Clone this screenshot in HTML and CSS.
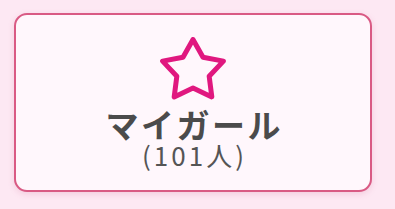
FILE: index.html
```html
<!DOCTYPE html>
<html lang="ja">
<head>
<meta charset="utf-8">
<link rel="stylesheet" href="styles.css">
</head>
<body>
<div class="card">
  <svg class="star" width="70" height="66" viewBox="0 0 70 66" aria-hidden="true">
    <polygon points="35,2.5 45,20.25 65.43,24.11 51.17,39.25 53.81,59.89 35,51 16.19,59.89 18.83,39.25 4.57,24.11 25,20.25" fill="none" stroke="#e0187f" stroke-width="5" stroke-linejoin="round"/>
  </svg>
  <div class="title">マイガール</div>
  <div class="count">(101人)</div>
</div>
</body>
</html>
```

FILE: styles.css
```css
html, body {
  margin: 0;
  padding: 0;
}
body {
  background: #fde8f3;
  width: 395px;
  height: 209px;
  overflow: hidden;
  font-family: "Noto Sans CJK JP", "Noto Sans", sans-serif;
}
.card {
  box-sizing: border-box;
  margin: 13px 0 0 14px;
  width: 358px;
  height: 179px;
  border: 2.5px solid #d95a84;
  border-radius: 13px;
  background: #fff7fc;
  box-shadow: 0 2px 6px rgba(200, 80, 130, 0.18);
  display: flex;
  flex-direction: column;
  align-items: center;
  padding-top: 22px;
}
.star {
  display: block;
}
.title {
  margin-top: 3px;
  font-size: 33px;
  line-height: 36px;
  font-weight: 700;
  color: #4b4b4b;
  letter-spacing: 2.5px;
  padding-left: 2.5px;
}
.count {
  font-size: 26px;
  line-height: 26px;
  font-weight: 400;
  color: #555;
  letter-spacing: 3px;
  padding-left: 3px;
}
```
